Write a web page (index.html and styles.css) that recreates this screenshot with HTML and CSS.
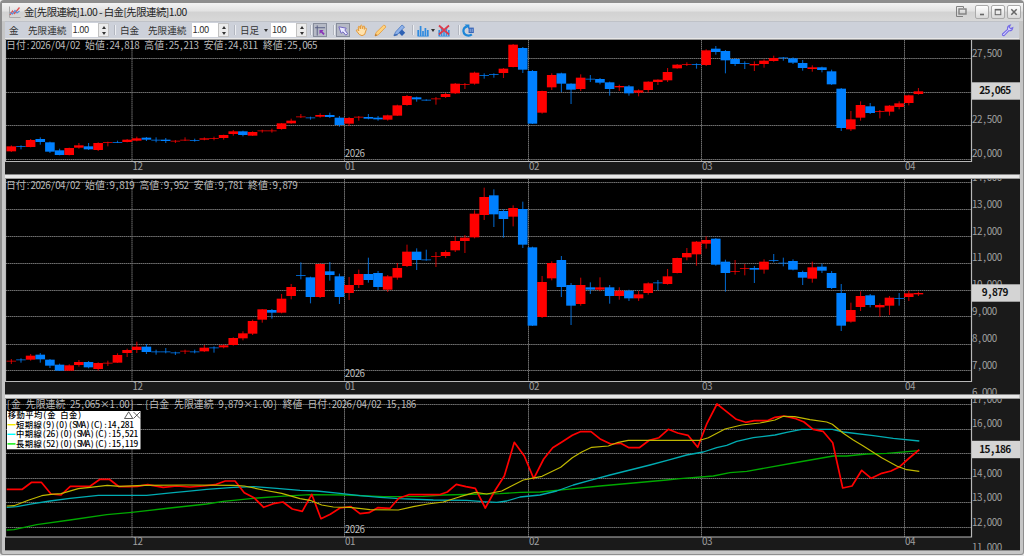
FILE: index.html
```html
<!DOCTYPE html>
<html lang="ja">
<head>
  <meta charset="UTF-8">
  <meta name="viewport" content="width=device-width, initial-scale=1.0">
  <title>金[先限連続]1.00 - 白金[先限連続]1.00</title>
  <link rel="stylesheet" href="styles.css">
</head>
<body>
  <div class="window">
    <div class="titlebar">
      <svg class="app-icon" width="13" height="13" viewBox="0 0 13 13">
        <path d="M1.5 0.5V11.5H12.5" fill="none" stroke="#aaa"/>
        <path d="M2 9L4.5 5L6.5 7.5L11.5 1.5" fill="none" stroke="#e05050" stroke-width="1.3"/>
        <path d="M2 6.5L4.5 8L7 4.5L9 7L11.5 5" fill="none" stroke="#5a8fd8" stroke-width="1.2"/>
      </svg>
      <span class="title">金[先限連続]1.00 - 白金[先限連続]1.00</span>
      <svg class="detach" width="13" height="12" viewBox="0 0 13 12" fill="none" stroke="#808080">
        <path d="M8 10.5H1.5V0.5H8.5V2"/>
        <rect x="4" y="3" width="7" height="5" stroke-width="1.4"/>
      </svg>
      <div class="win-btn"><svg width="8" height="8"><path d="M2 6.5H6" stroke="#666" stroke-width="1.6"/></svg></div>
      <div class="win-btn"><svg width="8" height="8"><path d="M1 1.7H7" stroke="#666" stroke-width="1.6"/><rect x="1.2" y="1.5" width="5.6" height="5.2" fill="none" stroke="#666"/></svg></div>
      <div class="win-btn"><svg width="8" height="8"><path d="M1.3 1.3L6.7 6.7M6.7 1.3L1.3 6.7" stroke="#666" stroke-width="1.5"/></svg></div>
    </div>

    <div class="toolbar">
      <span class="label gold">金</span>
      <span class="label">先限連続</span>
      <div class="spin"><span>1.00</span><i></i></div>
      <b class="sep"></b>
      <span class="label metal">白金</span>
      <span class="label">先限連続</span>
      <div class="spin"><span>1.00</span><i></i></div>
      <b class="sep"></b>
      <span class="label period">日足</span>
      <b class="caret"></b>
      <div class="spin count"><span>100</span><i></i></div>
      <b class="sep before-cross"></b>
      <div class="tool active">
        <svg width="13" height="13" viewBox="0 0 13 13">
          <path d="M3.5 1V12M1 3.5H12" stroke="#555b80" fill="none"/>
          <path d="M6 6H10.5L9 7.4L11.6 10L10.2 11.4L7.6 8.8L6 10.4Z" fill="#8a35b8"/>
        </svg>
      </div>
      <b class="sep before-pick"></b>
      <div class="tool active">
        <svg width="13" height="13" viewBox="0 0 13 13">
          <path d="M2 2.5L10 4L8.5 6L11.5 10L9.5 11.5L6.5 8L4.5 9.5Z" fill="#e8e8ff" stroke="#6d61bd"/>
        </svg>
      </div>
      <div class="tool hand">
        <svg width="13" height="13" viewBox="0 0 13 13">
          <path d="M4.3 10.5L1.4 6.8Q1.2 5.4 2.6 5.8L3.8 7L3.2 3Q3.7 1.6 4.7 2.7L5.4 5L5.5 1.7Q6.3 0.5 7.1 1.7L7.3 4.8L8.3 2.2Q9.4 1.5 9.6 2.7L9.1 5.3L10.5 4.2Q11.8 4.1 11.4 5.3L9.6 10.5Q7 12.8 4.3 10.5Z" fill="#ffe2ad" stroke="#e39a3c"/>
        </svg>
      </div>
      <div class="tool draw">
        <svg width="13" height="13" viewBox="0 0 13 13">
          <path d="M1 12L2 8.6L9.5 1.3Q11.5 0.8 11.8 3L4.3 10.8Z" fill="#ffd27e" stroke="#e39a3c" stroke-width=".8"/>
          <path d="M1 12L1.7 9.8L3.2 11.3Z" fill="#b06a28"/>
        </svg>
      </div>
      <div class="tool draw">
        <svg width="13" height="13" viewBox="0 0 13 13">
          <path d="M1 11.5L2.5 8L9 1L11.5 3L5 10Z" fill="#8fb2ea" stroke="#4a78c0" stroke-width=".8"/>
          <path d="M0.8 11.5L4.5 10.5" stroke="#3f6cb4" stroke-width="1.4"/>
          <path d="M9 5.5L12.2 8.8L9 12L5.8 8.8Z" fill="#2f62b4"/>
        </svg>
      </div>
      <b class="sep before-bars"></b>
      <div class="tool">
        <svg width="12" height="13" viewBox="0 0 12 13">
          <path d="M0.5 12.2H11.7" stroke="#2f8be0" stroke-width=".8"/>
          <path d="M1.2 6V12M3.6 2V12M6 7V12M8.4 4V12M10.8 6V12" stroke="#2f8be0" stroke-width="1.7"/>
        </svg>
      </div>
      <b class="caret"></b>
      <div class="tool clear">
        <svg width="12" height="13" viewBox="0 0 12 13">
          <path d="M0.5 12.2H11.7" stroke="#3a90e0" stroke-width=".8"/>
          <path d="M1.2 6V12M3.6 3V12M6 7V12M8.4 4V12M10.8 6V12" stroke="#3a90e0" stroke-width="1.6"/>
          <path d="M1 1.5L11 10.5M11 1.5L1 10.5" stroke="#dd3c4c" stroke-width="1.8"/>
        </svg>
      </div>
      <b class="sep before-reload"></b>
      <div class="tool">
        <svg width="13" height="13" viewBox="0 0 13 13">
          <path d="M4.8 2.6Q1.3 3.6 1.4 7.2Q2 11.6 6.6 11.6Q8.4 11.6 9.8 10.4" fill="none" stroke="#1c86d8" stroke-width="2.2"/>
          <path d="M2.6 0.6H7.4V5.6Z" fill="#1c86d8"/>
          <rect x="6.6" y="3.6" width="5.2" height="5.4" fill="#3a67b8"/>
          <path d="M8.2 4.8V8M10.2 4.8V8" stroke="#b9d2f2" stroke-width=".7"/>
        </svg>
      </div>
      <svg class="wrench" width="13" height="13" viewBox="0 0 13 13">
        <path d="M1.5 10L6.6 5.4Q5.9 2 9.3 1.1L8.2 3.3L9.7 4.6L11.8 3.6Q11.4 7.1 7.9 6.7L3.2 11.6Q1 12 1.5 10Z" fill="#d7d4ff" stroke="#756be6" stroke-width="1.1"/>
      </svg>
    </div>

    <div class="charts">
      <svg class="panel" id="gold"></svg>
      <svg class="panel" id="platinum"></svg>
      <svg class="panel" id="spread"></svg>
    </div>
  </div>

  <script src="charts.js"></script>
</body>
</html>
```
FILE: styles.css
```css
* {
  box-sizing: border-box;
}

body {
  margin: 0;
  width: 1024px;
  height: 556px;
  overflow: hidden;
  background: #ececec;
  font-family: "Noto Sans CJK JP", sans-serif;
}

.window {
  display: flex;
  flex-direction: column;
  width: 1024px;
  height: 555px;
  padding: 0 4px 0 3px;
  background: #c6c6c6;
  border: 1px solid #8e8e8e;
  border-width: 3px 1px 1px 2px;
  border-radius: 4px 4px 3px 3px;
}

.titlebar {
  display: flex;
  flex-shrink: 0;
  align-items: center;
  height: 18px;
  margin: 0 -4px 0 -3px;
  padding: 0 2px 0 6px;
  background: linear-gradient(#f3f3f3, #e2e2e2 45%, #d2d2d2 50%, #d8d8d8);
}

.app-icon {
  margin-right: 3px;
}

.title {
  width: 163px;
  font-size: 10.4px;
  line-height: 14px;
  letter-spacing: -0.55px;
  color: #222;
  white-space: nowrap;
}

.detach {
  margin-left: auto;
  margin-right: 5px;
}

.win-btn {
  display: flex;
  align-items: center;
  justify-content: center;
  width: 14px;
  height: 14px;
  margin-left: 2px;
  border: 1px solid #aaa;
  border-radius: 2px;
  background: linear-gradient(#fff, #d8d8d8);
}

.toolbar {
  display: flex;
  flex-shrink: 0;
  align-items: center;
  height: 17px;
  padding-left: 4px;
  background: #cdd1da;
  border-top: 1px solid #bfc2c8;
}

.label {
  width: 43.5px;
  font-size: 9.6px;
  line-height: 14px;
  color: #333;
  white-space: nowrap;
}

.label.gold {
  width: 19px;
}

.label.metal {
  width: 28px;
}

.label.period {
  width: 22px;
}

.spin {
  display: flex;
  width: 37.5px;
  height: 14px;
  background: #fff;
  font-size: 9.4px;
  line-height: 12px;
  letter-spacing: -0.5px;
  color: #333;
}

.spin.count {
  width: 36px;
  margin-left: 2px;
}

.spin span {
  flex: 1;
  padding-left: 1px;
}

.spin i {
  display: flex;
  flex-direction: column;
  align-items: center;
  justify-content: center;
  gap: 3px;
  width: 11px;
  border: 1px solid #c2c2c2;
  background: #ececec;
}

.spin i::before,
.spin i::after {
  content: "";
  border: 2.5px solid transparent;
  border-top-width: 0;
  border-bottom: 3px solid #333;
}

.spin i::after {
  transform: rotate(180deg);
}

.sep {
  width: 2px;
  height: 10px;
  margin: 0 4px 0 5px;
  border-left: 1px solid #b3b7c0;
  border-right: 1px solid #eceef2;
}

.sep.before-cross {
  margin: 0 1px 0 3px;
}

.sep.before-pick {
  margin: 0 1px 0 6px;
}

.sep.before-bars {
  margin: 0 3px 0 6px;
}

.sep.before-reload {
  margin: 0 2px 0 8px;
}

.caret {
  margin: 1px 1px 0 2px;
  border: 2.5px solid transparent;
  border-top: 3px solid #333;
  border-bottom: 0;
}

.tool {
  display: flex;
  align-items: center;
  justify-content: center;
  height: 14px;
}

.tool.active {
  width: 14px;
  background: #b6bac6;
  border: 1px solid #888e9c;
}

.tool.hand {
  margin-left: 5px;
}

.tool.draw {
  margin-left: 6px;
}

.tool.clear {
  margin-left: 2px;
}

.wrench {
  margin-left: auto;
  margin-right: 5px;
}

.charts {
  display: flex;
  flex-direction: column;
  flex-shrink: 0;
  gap: 3px;
  padding-top: 1px;
  background: #e8e8e8;
}

.panel {
  display: block;
  width: 1015px;
  background: #1a1a1a;
  border-bottom: 1px solid #8a8a8a;
  border-top: 1px solid #9a9a9a;
}

#gold {
  height: 136px;
}

#platinum {
  height: 217px;
}

#spread {
  height: 153px;
}

.plot {
  fill: #000;
}

.frame {
  fill: none;
  stroke: #b8b8b8;
  stroke-width: 1.2;
}

.grid {
  fill: none;
  stroke: #707070;
  stroke-dasharray: 1.5 0.4;
}

.up {
  fill: #f00;
}

.down {
  fill: #0080ff;
}

.wick {
  opacity: 0.75;
}

.text {
  font-family: "Noto Sans CJK JP", sans-serif;
  font-size: 9.8px;
  text-anchor: middle;
  fill: #bcbcbc;
}

.text.axis {
  fill: #a0a0a0;
}

.text.tag {
  font-size: 10px;
  font-weight: bold;
  fill: #111;
}

.text.legend {
  font-size: 8.3px;
  font-weight: 500;
  fill: #000;
}

.tag-box {
  fill: #d4d4d4;
}

.legend-box {
  fill: #fff;
}

.legend-btn {
  fill: none;
  stroke: #333;
  stroke-width: 0.8;
}

.line {
  fill: none;
  stroke-linejoin: round;
}

.price {
  stroke: #f00;
  stroke-width: 1.7;
}

.short {
  stroke: #c0b800;
  stroke-width: 1.2;
}

.mid {
  stroke: #00acb2;
  stroke-width: 1.3;
}

.long {
  stroke: #00a800;
  stroke-width: 1.3;
}

.key-short {
  stroke: #f4ec00;
  stroke-width: 1.4;
}

.key-mid {
  stroke: #0ff;
  stroke-width: 1.4;
}

.key-long {
  stroke: #0e0;
  stroke-width: 1.4;
}
```
FILE: charts.js
```js
// candles: direction, high, body top, body bottom, low (thirds of a pixel from the panel base)
const gold = `r328,331,346,348 b328,330,332,340 r309,312,333,334 b304,309,318,326 b317,319,347,351
b338,343,357,358 r335,336,357,358 r321,328,335,338 b321,331,340,342 r319,321,342,345
r317,318,320,331 b314,318,320,321 r309,311,318,319 r302,307,314,316 b303,305,311,315
b304,311,313,319 b306,311,315,321 r312,314,316,321 r304,311,314,315 b308,312,314,317
r304,307,311,313 r302,306,308,313 r296,297,306,311 r282,286,294,299 b284,286,297,301
r286,288,299,300 r281,283,286,290 r278,283,285,290 r261,262,279,281 r248,254,262,263
r234,241,243,246 b242,244,246,251 r232,237,242,245 b230,237,243,246 b240,245,267,272
r243,246,263,270 r240,242,244,254 b234,243,248,250 b240,245,250,254 r236,238,251,254
r206,208,239,240 r177,180,207,209 b182,184,190,197 b190,191,193,194 r183,187,190,206
r171,174,183,186 r141,143,172,174 r141,144,146,159 r107,110,143,146 b112,117,119,128
b112,114,116,125 r96,98,111,126 r24,26,93,94 b33,36,101,111 b102,105,263,264
r164,165,230,233 r112,117,154,162 b110,112,143,168 b142,143,161,204 r115,125,159,165
b117,128,131,138 b126,129,140,145 b137,139,159,179 r146,150,154,165 b147,151,172,179
r160,163,170,181 r136,137,162,169 r130,131,138,147 r96,108,133,138 r84,86,97,98
r79,84,87,90 b82,84,86,98 r40,43,87,90 b30,38,48,56 b42,45,73,112
b66,69,84,90 b76,81,83,99 r76,84,88,105 r70,74,84,95 r59,66,75,77
b63,64,66,74 b64,67,80,84 b72,81,96,104 r88,94,99,107 b92,94,102,109
b101,106,145,147 b156,158,276,285 r225,250,280,285 r196,207,245,254 b201,211,231,234
r222,225,228,247 r207,209,227,239 r196,202,213,220 r176,178,201,208 r156,166,174,176`;

const platinum = `r555,560,563,570 b553,556,558,566 r540,545,557,560 b537,542,556,566 b555,557,575,582
b569,572,590,591 r571,574,590,591 r558,564,573,578 b561,564,580,583 r565,567,585,590
r560,566,568,576 r538,543,566,567 r524,528,537,549 r503,518,528,537 b510,518,534,540
b527,532,534,542 b522,532,535,538 b533,535,538,543 r527,530,533,540 b527,532,534,538
r513,521,532,534 b517,520,523,536 r511,514,520,523 r490,492,513,515 r472,478,493,499
r437,441,479,483 r405,406,437,446 b405,408,416,434 r360,374,416,418 r330,339,366,376
b265,303,306,316 b308,310,369,388 r268,270,369,372 b264,292,303,320 b299,307,369,390
r309,333,357,378 r287,300,333,342 b251,300,318,326 b291,297,339,348 r303,307,347,354
r267,282,311,317 r212,233,276,279 b223,233,258,288 b227,256,258,260 r234,246,248,279
r229,234,246,252 r186,201,229,234 r183,191,201,237 r109,119,190,193 r41,69,123,138
b46,64,121,159 b106,111,135,191 r94,102,128,157 b83,105,212,222 b218,220,455,456
r306,324,429,432 r262,267,313,319 b246,258,339,369 b327,333,395,453 r311,333,390,395
b325,340,347,360 r310,340,347,352 b333,340,366,389 r340,350,366,377 b347,350,373,381
r351,361,373,381 r325,328,357,362 b318,325,328,348 r285,307,330,332 r251,252,297,298
r222,237,250,259 r201,203,241,275 r187,198,209,224 b192,194,272,275 b257,263,297,353
r258,291,294,302 r270,282,285,304 b276,282,287,327 r256,263,287,299 b240,258,260,265
b251,266,269,277 b256,261,287,289 b290,294,311,333 r263,280,314,326 b269,278,290,297
b291,297,342,345 b330,357,455,471 r386,408,443,446 r352,366,399,411 b360,364,393,400
r388,393,400,428 r366,371,395,423 b357,372,375,395 r350,358,369,381 r353,357,361,366`;

const lines = {
  long: '20,420 42,419 110,404 210,390 320,374 395,367 510,354 620,342 670,334 760,325 840,319 930,314 1040,315 1150,320 1270,319 1330,315 1500,311 1560,307 1620,306 1700,298 1800,288 1900,279 2000,270 2040,266 2140,258 2190,248 2240,244 2380,219 2500,198 2540,198 2600,192 2660,190 2758,182',
  mid: '20,352 50,350 100,341 150,333 210,325 295,316 440,316 520,308 560,304 620,298 700,292 762,290 830,295 900,301 950,303 1020,310 1080,317 1140,322 1200,326 1300,330 1400,331 1450,335 1490,337 1520,333 1560,321 1620,315 1670,303 1720,285 1770,271 1830,255 1890,240 1950,225 2010,209 2060,195 2110,186 2150,173 2180,166 2210,154 2260,143 2325,135 2360,127 2405,118 2497,118 2530,126 2620,137 2680,145 2758,153',
  price: '20,298 67,298 95,277 124,277 153,312 183,315 211,289 270,289 300,268 328,268 357,290 385,290 412,289 443,284 490,292 530,288 570,291 610,288 645,284 676,273 705,273 733,308 762,323 791,352 820,341 849,336 877,357 907,364 935,313 963,386 991,373 1020,354 1053,350 1080,371 1107,368 1133,353 1170,355 1196,325 1226,314 1318,314 1342,306 1369,283 1398,290 1426,295 1456,354 1484,303 1513,258 1543,157 1573,198 1601,266 1631,207 1658,173 1687,155 1717,136 1741,125 1773,125 1802,148 1832,162 1862,160 1887,173 1918,173 1948,151 1977,143 2005,118 2033,129 2064,136 2093,172 2121,100 2151,42 2179,64 2209,88 2237,97 2263,92 2302,92 2325,82 2352,78 2384,85 2412,96 2439,118 2469,124 2498,158 2528,294 2556,288 2585,241 2614,265 2645,250 2673,243 2699,230 2728,204 2758,179',
  short: '20,348 42,347 85,331 125,317 153,313 183,311 235,296 270,292 322,286 360,289 430,286 560,285 700,286 733,288 790,300 845,310 900,326 930,331 965,345 1000,351 1050,352 1110,359 1195,360 1240,350 1283,342 1330,336 1380,320 1426,307 1460,312 1505,303 1530,290 1570,270 1626,259 1682,232 1717,203 1745,186 1775,172 1825,168 1855,157 1885,151 2100,151 2125,143 2175,117 2225,105 2280,99 2325,90 2350,79 2384,80 2430,89 2480,96 2497,103 2530,130 2560,150 2590,168 2645,203 2690,228 2720,239 2758,244'
};

const LEFT = 6;
const RIGHT = 971.5;
const months = [[132, '12'], [344.5, '01'], [528.5, '02'], [701.5, '03'], [904.5, '04']];

// fixed-pitch text: full-width characters take two cells
function text(str, x, y, cls = '', cell = 4.94) {
  const xs = [];
  for (const ch of str) {
    const w = /[ -~]/.test(ch) ? cell : cell * 2;
    xs.push((x + w / 2).toFixed(2));
    x += w;
  }
  return `<text class="text ${cls}" x="${xs.join(' ')}" y="${y}" xml:space="preserve">${str}</text>`;
}

function candles(data, base) {
  return data.split(/\s+/).map((item, i) => {
    const [h, t, b, l] = item.slice(1).split(',').map(v => base + v / 3);
    const cls = item[0] === 'r' ? 'up' : 'down';
    const x = 11.3 + i * 9.65;
    const thin = b - t < 1.2 ? ' wick' : '';
    return `<rect class="${cls} wick" x="${x - 0.5}" y="${h}" width="1.1" height="${l - h}"/>` +
      `<rect class="${cls}${thin}" x="${x - 4.8}" y="${t}" width="9.6" height="${Math.max(b - t, 1)}"/>`;
  }).join('');
}

function draw(id, o) {
  const svg = document.getElementById(id);
  svg.setAttribute('viewBox', `5 ${o.top} 1015 ${o.height}`);
  let out = `<rect class="plot" x="5" y="${o.top}" width="${RIGHT - 5}" height="${o.bottom - o.top}"/>`;
  let grid = '';
  o.grid.forEach(v => grid += `M${LEFT} ${Math.floor(o.base + v / 3) + 0.5}H${RIGHT}`);
  months.forEach(m => grid += `M${m[0]} ${o.top}V${o.bottom}`);
  out += `<path class="grid" d="${grid}"/>`;
  out += o.body;
  out += `<path class="frame" d="M5.5 ${o.top}V${o.bottom}H${RIGHT}V${o.top}"/>`;
  months.forEach(m => out += text(m[1], m[0] + 0.7, o.bottom + 8.3, 'axis'));
  out += text('2026', 345, o.bottom - 4.5);
  o.labels.forEach(([str, y]) => out += text(str, 972.3, y + 3.6, 'axis'));
  out += `<rect class="tag-box" x="972" y="${o.tagY - 8.7}" width="48" height="17.4"/>`;
  out += text(o.tag, o.tag.length > 5 ? 979.6 : 982, o.tagY + 3.4, 'tag', 5.2);
  out += text(o.info, 6, o.infoY);
  out += o.over || '';
  svg.innerHTML = out;
}

draw('gold', {
  top: 40, height: 134, bottom: 161.5, base: 36,
  grid: [67, 169, 267, 369],
  body: candles(gold, 36),
  labels: [['27,500', 53], ['22,500', 119.7], ['20,000', 153.3]],
  tag: '25,065', tagY: 91,
  info: '日付:2026/04/02 始値:24,818 高値:25,213 安値:24,811 終値:25,065', infoY: 49.4
});

draw('platinum', {
  top: 179, height: 215, bottom: 381.5, base: 174,
  grid: [26, 106, 187, 267, 349, 428, 510, 589],
  body: candles(platinum, 174),
  labels: [['14,000', 177.5], ['13,000', 204], ['12,000', 231], ['11,000', 257.7], ['10,000', 284.5],
    ['9,000', 311.3], ['8,000', 338.5], ['7,000', 365], ['6,000', 392]],
  tag: '9,879', tagY: 293,
  info: '日付:2026/04/02 始値:9,819 高値:9,952 安値:9,781 終値:9,879', infoY: 189
});

const legend = [['short', '短期線(9)(0)(SMA)(C):14,281'], ['mid', '中期線(26)(0)(SMA)(C):15,521'], ['long', '長期線(52)(0)(SMA)(C):15,119']];
let box = '<rect class="legend-box" x="7" y="411" width="133.5" height="38.3"/>' +
  text('移動平均(金 白金)', 7.6, 418.4, 'legend', 4.37) +
  '<path class="legend-btn" d="M124.5 418.5L128.7 411.8L132.8 418.5ZM133.5 412L140 418.5M140 412L133.5 418.5"/>';
legend.forEach(([key, str], i) => {
  const y = 424.7 + i * 9.6;
  box += `<path class="key-${key}" d="M7.5 ${y}H15.5"/>` + text(str, 15.8, y + 3.1, 'legend', 4.37);
});

draw('spread', {
  top: 399, height: 151, bottom: 537, base: 390,
  grid: [44, 117, 190, 266, 338, 412],
  body: Object.keys(lines).map(key => {
    const pts = lines[key].split(' ').map(p => p.split(',')).map(([x, y]) => `${(x / 3).toFixed(1)},${(390 + y / 3).toFixed(1)}`);
    return `<polyline class="line ${key}" points="${pts.join(' ')}"/>`;
  }).join(''),
  labels: [['17,000', 399.5], ['16,000', 423.5], ['14,000', 473], ['13,000', 497.3], ['12,000', 522.3], ['11,000', 547]],
  tag: '15,186', tagY: 449.5,
  info: '[金 先限連続 25,065×1.00]−[白金 先限連続 9,879×1.00] 終値 日付:2026/04/02 15,186', infoY: 408.3,
  over: box
});
```
